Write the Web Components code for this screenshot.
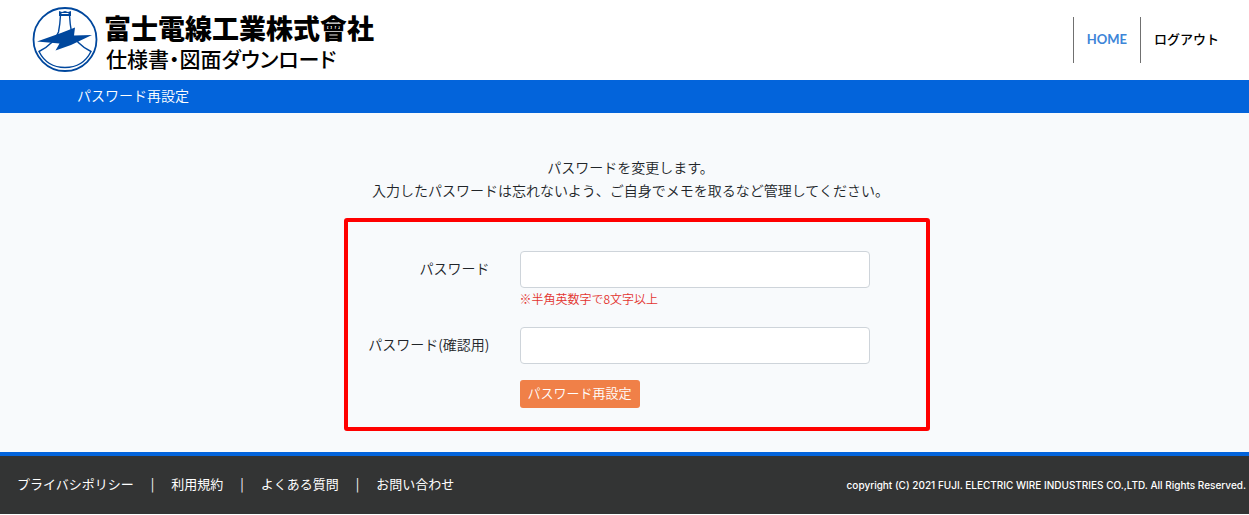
<!DOCTYPE html>
<html lang="ja">
<head>
<meta charset="utf-8">
<meta name="viewport" content="width=device-width, initial-scale=1">
<title>パスワード再設定</title>
<style>
  body {
    margin: 0;
    background: #fff;
    color: #212529;
    font-family: "Noto Sans CJK JP", sans-serif;
    font-size: 14px;
    font-weight: 400;
    line-height: 23px;
  }
</style>
</head>
<body>
<reset-page></reset-page>
<script>
function define(name, html, setup) {
  const template = document.createElement('template');
  template.innerHTML = html;
  customElements.define(name, class extends HTMLElement {
    constructor() {
      super();
      this.attachShadow({ mode: 'open' }).append(template.content.cloneNode(true));
    }
    connectedCallback() {
      if (setup) setup(this, this.shadowRoot);
    }
  });
}

define('brand-logo', `
  <style>
    :host { display: flex; align-items: center; gap: 6px; color: #000; font-weight: 700; }
    svg { display: block; width: 66px; height: 66px; flex: none; }
    .text { padding-top: 6px; white-space: nowrap; }
    .name { font-size: 27px; line-height: 30px; font-weight: 900; }
    .sub { font-size: 21px; line-height: 30px; padding-left: 2px; font-weight: 500; font-feature-settings: "palt"; }
  </style>
  <svg viewBox="0 0 66 66" aria-hidden="true">
    <circle cx="33" cy="32.500" r="31.500" fill="#fff" stroke="#00479d" stroke-width="1.800"/>
    <path d="M28.500 8Q28 18 26.500 25Q22 37 7 44.500Q15 60.500 33 60.500Q51 60.500 59 44.500Q44 37 39.500 25Q38 18 37.500 8Z" fill="none" stroke="#00479d" stroke-width="1.400"/>
    <path d="M27 4L30 5L33 4L36 5L39 4V9H27Z" fill="#00479d"/>
    <path d="M29.500 6.500H36.500" stroke="#fff" stroke-width="1"/>
    <path d="M5 34.500L29 26L43 20.500L42 28.500L60 28L39 38L23.500 43.500L27.500 36.500Z" fill="#00479d"/>
  </svg>
  <div class="text">
    <div class="name">富士電線工業株式會社</div>
    <div class="sub">仕様書・図面ダウンロード</div>
  </div>`);

define('site-header', `
  <style>
    :host { display: flex; justify-content: space-between; align-items: center; height: 80px; padding: 0 30px 0 32px; }
    nav { display: flex; font-size: 13px; font-weight: 500; }
    a { color: #000; text-decoration: none; line-height: 44px; padding: 0 0 2px 13px; border-left: 1px solid #707070; }
    a.home { color: #3d85d8; padding-right: 13px; font-family: Lato, sans-serif; font-weight: 700; }
  </style>
  <brand-logo></brand-logo>
  <nav><a class="home" href="#">HOME</a><a href="#">ログアウト</a></nav>`);

define('title-bar', `
  <style>
    :host { display: block; background: #0364db; color: #fff; padding: 4px 77px 6px; }
    h1 { margin: 0; font: inherit; }
  </style>
  <h1><slot></slot></h1>`);

define('password-field', `
  <style>
    :host { display: grid; grid-template-columns: 1fr 350px; column-gap: 30px; }
    label { text-align: right; line-height: 35px; }
    input { box-sizing: border-box; width: 100%; height: 37px; padding: 6px 12px; border: 1px solid #ced4da; border-radius: 4px; background: #fff; font: inherit; display: block; }
    .note { grid-column: 2; color: #e3342f; font-size: 12px; line-height: 21px; padding-bottom: 2px; }
    :host(:empty) .note { display: none; }
  </style>
  <label for="field"></label>
  <input id="field" type="password">
  <div class="note"><slot></slot></div>`,
  (host, root) => { root.querySelector('label').textContent = host.getAttribute('label'); });

define('reset-form', `
  <style>
    :host { display: block; box-sizing: border-box; width: 586px; max-width: 100%; border: 4px solid #f00; border-radius: 3px; padding: 29px 56px 19px 0; }
    form { display: grid; gap: 16px; }
    button { justify-self: start; margin-left: 172px; height: 28px; padding: 0 8px 2px; border: 0; border-radius: 3px; background: #f08048; color: #fff; font: inherit; font-size: 13px; line-height: 26px; }
  </style>
  <form>
    <password-field label="パスワード">※半角英数字で8文字以上</password-field>
    <password-field label="パスワード(確認用)"></password-field>
    <button type="button">パスワード再設定</button>
  </form>`);

define('site-footer', `
  <style>
    :host { display: flex; justify-content: space-between; align-items: center; background: #333434; border-top: 4px solid #0364db; color: #fff; height: 58px; padding: 0 3px 0 17px; }
    nav { display: flex; gap: 17px; font-size: 13px; padding-bottom: 4px; }
    a { color: inherit; text-decoration: none; }
    small { font: 500 10px/16px Inter, sans-serif; }
  </style>
  <nav><a href="#">プライバシポリシー</a><span>|</span><a href="#">利用規約</a><span>|</span><a href="#">よくある質問</a><span>|</span><a href="#">お問い合わせ</a></nav>
  <small>copyright (C) 2021 FUJI. ELECTRIC WIRE INDUSTRIES CO.,LTD. All Rights Reserved.</small>`);

define('reset-page', `
  <style>
    :host { display: block; }
    main { display: flex; flex-direction: column; align-items: center; background: #f8fafc; padding: 43px 0 21px 12px; font-weight: 350; }
    title-bar { font-weight: 350; }
    p { margin: 0 0 16px; text-align: center; }
    reset-form { margin-left: 12px; }
  </style>
  <site-header></site-header>
  <title-bar>パスワード再設定</title-bar>
  <main>
    <p>パスワードを変更します。<br>入力したパスワードは忘れないよう、ご自身でメモを取るなど管理してください。</p>
    <reset-form></reset-form>
  </main>
  <site-footer></site-footer>`);
</script>
</body>
</html>
